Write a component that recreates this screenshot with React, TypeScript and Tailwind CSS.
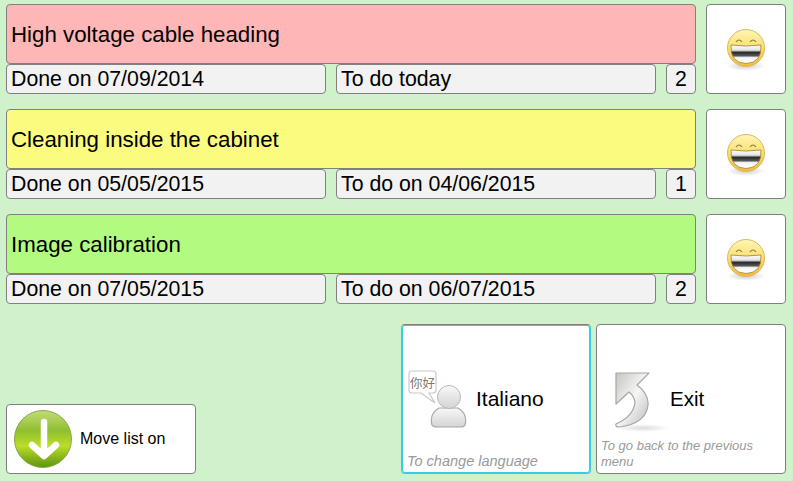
const FONT = "font-['Liberation_Sans',Arial,sans-serif]";

function SmileIcon() {
  return (
    <svg width="44" height="44" viewBox="0 0 44 44">
      <defs>
        <linearGradient id="face" x1="0" y1="0" x2="0" y2="1">
          <stop offset="0" stopColor="#fff6b8" />
          <stop offset="0.5" stopColor="#fbdf6c" />
          <stop offset="1" stopColor="#f3b93a" />
        </linearGradient>
        <linearGradient id="teeth" x1="0" y1="0" x2="0" y2="1">
          <stop offset="0" stopColor="#ffffff" />
          <stop offset="0.28" stopColor="#e4e4e4" />
          <stop offset="0.4" stopColor="#2a2a2a" />
          <stop offset="0.58" stopColor="#555555" />
          <stop offset="0.68" stopColor="#f4f4f4" />
          <stop offset="1" stopColor="#ffffff" />
        </linearGradient>
        <radialGradient id="shadow">
          <stop offset="0" stopColor="#000000" stopOpacity="0.2" />
          <stop offset="1" stopColor="#000000" stopOpacity="0" />
        </radialGradient>
      </defs>
      <ellipse cx="22" cy="38" rx="19" ry="5" fill="url(#shadow)" />
      <circle cx="22" cy="20" r="18.5" fill="url(#face)" stroke="#dcb860" strokeWidth="1" />
      <path d="M12 14 Q15 10 18 14" fill="none" stroke="#8a7a50" strokeWidth="1.1" />
      <path d="M26 14 Q29 10 32 14" fill="none" stroke="#8a7a50" strokeWidth="1.1" />
      <path d="M7 17 Q22 19 37 17 Q38 35 22 35.5 Q6 35 7 17 Z" fill="url(#teeth)" stroke="#a08030" strokeWidth="0.8" />
    </svg>
  );
}

function ArrowIcon() {
  return (
    <svg width="58" height="58" viewBox="0 0 58 58">
      <defs>
        <linearGradient id="ball" x1="0" y1="0" x2="0" y2="1">
          <stop offset="0" stopColor="#c3dc78" />
          <stop offset="0.35" stopColor="#8fbf30" />
          <stop offset="0.62" stopColor="#bcdc28" />
          <stop offset="1" stopColor="#5c9410" />
        </linearGradient>
      </defs>
      <circle cx="29" cy="29" r="28.5" fill="url(#ball)" stroke="#8aa850" strokeWidth="1" />
      <path d="M30 12 V45 M18 35 L30 46 L42 35" fill="none" stroke="#ffffff" strokeWidth="6.5" strokeLinecap="round" strokeLinejoin="round" />
    </svg>
  );
}

function LanguageIcon() {
  return (
    <svg width="60" height="60" viewBox="0 0 60 60">
      <defs>
        <linearGradient id="person" x1="0" y1="0" x2="0" y2="1">
          <stop offset="0" stopColor="#f8f8f8" />
          <stop offset="1" stopColor="#d4d4d4" />
        </linearGradient>
      </defs>
      <path d="M4 1 H25 Q28 1 28 4 V20 Q28 23 25 23 H21 L27 33 L13 23 H4 Q1 23 1 20 V4 Q1 1 4 1 Z" fill="#ffffff" stroke="#c8c8c8" strokeWidth="1.2" />
      <text x="14.5" y="18" textAnchor="middle" fontSize="12.5" fill="#777777" fontFamily="'Noto Sans CJK SC',sans-serif">你好</text>
      <path d="M24 55 Q21 44 31 38 H50 Q60 44 57 55 Q56 57 52 57 H29 Q25 57 24 55 Z" fill="url(#person)" stroke="#a8a8a8" strokeWidth="1.2" />
      <circle cx="41" cy="27" r="11.5" fill="url(#person)" stroke="#b8b8b8" strokeWidth="1" />
    </svg>
  );
}

function ExitIcon() {
  return (
    <svg width="60" height="62" viewBox="0 0 60 62">
      <defs>
        <linearGradient id="bend" x1="0" y1="0" x2="1" y2="1">
          <stop offset="0" stopColor="#c4c6c2" />
          <stop offset="0.5" stopColor="#f6f6f4" />
          <stop offset="1" stopColor="#b8bab6" />
        </linearGradient>
        <radialGradient id="bendShadow">
          <stop offset="0" stopColor="#000000" stopOpacity="0.14" />
          <stop offset="1" stopColor="#000000" stopOpacity="0" />
        </radialGradient>
      </defs>
      <ellipse cx="28" cy="56" rx="27" ry="4" fill="url(#bendShadow)" />
      <path d="M1 1 H34 L22 13 Q34 22 33 33 Q31 52 4 55 Q0 55 1 52 Q19 44 20 30 Q19 24 14 20 L1 32 Z" fill="url(#bend)" stroke="#a6a8a4" strokeWidth="1.2" strokeLinejoin="round" />
    </svg>
  );
}

function Field({ text, className }: { text: string; className: string }) {
  return (
    <div className={`flex items-center h-[30px] pt-[1px] bg-[#f2f2f2] border border-[#808080] rounded-[4px] text-[21.3px] text-black ${className}`}>
      {text}
    </div>
  );
}

interface TaskRowProps {
  title: string;
  color: string;
  done: string;
  todo: string;
  count: number;
}

function TaskRow({ title, color, done, todo, count }: TaskRowProps) {
  return (
    <div className="flex gap-[10px] h-[90px]">
      <div className="flex flex-col w-[690px]">
        <div className={`flex items-center h-[60px] pl-[4px] pt-[1px] border border-[#808080] rounded-[4px] text-[22.3px] text-black ${color}`}>
          {title}
        </div>
        <div className="flex gap-[10px]">
          <Field text={done} className="w-[320px] pl-[4px]" />
          <Field text={todo} className="w-[320px] pl-[4px]" />
          <Field text={String(count)} className="w-[30px] justify-center" />
        </div>
      </div>
      <div className="flex items-center justify-center w-[80px] pt-[2px] bg-white border border-[#808080] rounded-[4px]">
        <SmileIcon />
      </div>
    </div>
  );
}

export default function App() {
  return (
    <div className={`flex flex-col w-[793px] h-[481px] pt-[4px] pl-[6px] bg-[#d0f2cb] overflow-hidden ${FONT}`}>
      <div className="flex flex-col gap-[15px]">
        <TaskRow title="High voltage cable heading" color="bg-[#ffb6b6]" done="Done on 07/09/2014" todo="To do today" count={2} />
        <TaskRow title="Cleaning inside the cabinet" color="bg-[#fbfb80]" done="Done on 05/05/2015" todo="To do on 04/06/2015" count={1} />
        <TaskRow title="Image calibration" color="bg-[#b2fb80]" done="Done on 07/05/2015" todo="To do on 06/07/2015" count={2} />
      </div>

      <div className="flex items-end mt-[20px] w-[780px]">
        <button className="flex items-center w-[190px] h-[70px] pl-[7px] bg-white border border-[#808080] rounded-[4px] text-[16px] text-black">
          <ArrowIcon />
          <span className="ml-[8px]">Move list on</span>
        </button>

        <div className="flex flex-col w-[190px] h-[150px] ml-[205px] bg-white border border-[#808080] border-b-[#33ccee] border-l-[#33ccee] border-r-[#33ccee] rounded-[4px] shadow-[inset_0_0_0_1px_#33ccee]">
          <div className="flex items-center flex-1 pl-[6px] pt-[22px]">
            <LanguageIcon />
            <span className="ml-[8px] mb-[2px] text-[21px] text-black">Italiano</span>
          </div>
          <div className="pl-[5px] pb-[4px] text-[14.5px] leading-[16px] italic text-[#9a9a9a]">To change language</div>
        </div>

        <div className="flex flex-col w-[190px] h-[150px] ml-[5px] bg-white border border-[#808080] rounded-[4px]">
          <div className="flex items-center flex-1 pl-[18px] pt-[42px]">
            <ExitIcon />
            <span className="-ml-[5px] mb-[6px] text-[20.5px] text-black">Exit</span>
          </div>
          <div className="pl-[4px] pb-[3px] text-[13px] leading-[16px] italic text-[#9a9a9a]">To go back to the previous menu</div>
        </div>
      </div>
    </div>
  );
}
